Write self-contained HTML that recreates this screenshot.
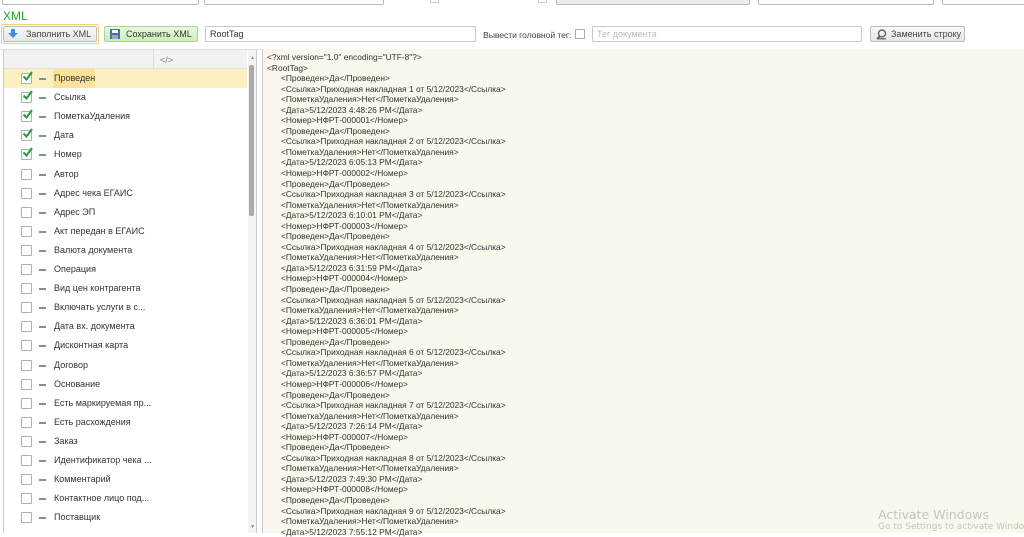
<!DOCTYPE html>
<html><head><meta charset="utf-8">
<style>
*{box-sizing:border-box;margin:0;padding:0}
body{width:1024px;height:533px;overflow:hidden;background:#fff;font-family:"Liberation Sans","DejaVu Sans",sans-serif;font-size:9px;color:#333;position:relative}
.a{position:absolute}
.top{top:-8px;height:13px;border:1px solid #bbb;border-radius:2px;background:#fff}
.btn{position:absolute;top:26px;height:16px;border:1px solid #bdbdbd;border-radius:2px;background:linear-gradient(#fafafa,#e6e6e6);font-size:9px;color:#444;line-height:14px}
.inp{position:absolute;top:26px;height:16px;border:1px solid #c8c8c8;border-radius:2px;background:#fff;line-height:14px;padding-left:4px}
.row{position:absolute;left:4px;width:243px;height:19px}
.cb{position:absolute;left:17px;top:4px;width:11px;height:11px;border:1px solid #b0b0b0;background:#fff;border-radius:1px}
.dash{position:absolute;left:35px;top:9px;width:7px;height:2px;background:#7a8fa8}
.lb{position:absolute;left:50px;top:4px;white-space:nowrap;color:#333}
.xml{position:absolute;left:267px;top:52px;line-height:10.55px;font-size:8.4px;color:#333;white-space:pre}
</style></head><body>
<div class="a top" style="left:2px;width:197px"></div>
<div class="a top" style="left:204px;width:180px"></div>
<div class="a" style="left:430px;top:-6px;width:9px;height:9px;border:1px solid #ccc"></div>
<div class="a" style="left:538px;top:-6px;width:9px;height:9px;border:1px solid #ccc"></div>
<div class="a top" style="left:556px;width:194px;background:#ececec"></div>
<div class="a top" style="left:758px;width:176px"></div>
<div class="a top" style="left:942px;width:90px"></div>

<div class="a" style="left:3px;top:9px;font-size:12px;color:#2aa32a">XML</div>

<div class="a" style="left:1px;top:24px;width:98px;height:20px;border:1px solid #f3d26b;border-radius:2px"></div>
<div class="btn" style="left:3px;width:94px"><svg class="a" style="left:4px;top:2px" width="10" height="10" viewBox="0 0 10 10"><path d="M3 0h4v4h3L5 9 0 4h3z" fill="#3d8fd9"/></svg><span class="a" style="left:22px">Заполнить XML</span></div>
<div class="btn" style="left:104px;width:94px;background:linear-gradient(#e8fae0,#c8efb8);border-color:#a9d49a"><svg class="a" style="left:5px;top:2px" width="10" height="10" viewBox="0 0 10 10"><rect width="10" height="10" fill="#4a6fa5"/><rect x="2" y="1" width="6" height="3" fill="#fff"/><rect x="2" y="6" width="6" height="4" fill="#9ab"/></svg><span class="a" style="left:21px;color:#333">Сохранить XML</span></div>
<div class="inp" style="left:205px;width:271px;color:#333">RootTag</div>
<div class="a" style="left:483px;top:30px;color:#444;font-size:8.7px;letter-spacing:-0.1px">Вывести головной тег:</div>
<div class="a" style="left:575px;top:29px;width:10px;height:10px;border:1px solid #aaa;background:#fff"></div>
<div class="inp" style="left:592px;width:270px;color:#bbb">Тег документа</div>
<div class="btn" style="left:870px;width:95px"><svg class="a" style="left:5px;top:2px" width="11" height="11" viewBox="0 0 11 11"><circle cx="6" cy="4.5" r="3.5" fill="none" stroke="#555" stroke-width="1.3"/><path d="M1 10l3-3" stroke="#555" stroke-width="1.6"/><rect x="2" y="9" width="8" height="1.5" fill="#777"/></svg><span class="a" style="left:20px">Заменить строку</span></div>

<div class="a" style="left:0;top:49px;width:1024px;height:1px;background:#ddd"></div>
<div class="a" style="left:3px;top:50px;width:254px;height:483px;border-left:1px solid #ccc;border-right:1px solid #ccc"></div>
<div class="a" style="left:4px;top:50px;width:243px;height:19px;background:#f2f2f2;border-bottom:1px solid #e0e0e0"></div>
<div class="a" style="left:153px;top:50px;width:1px;height:19px;background:#ddd"></div>
<div class="a" style="left:160px;top:55px;color:#777">&lt;/&gt;</div>
<div class="a" style="left:248px;top:50px;width:8px;height:483px;background:#f4f4f4"></div>
<div class="a" style="left:249px;top:65px;width:5px;height:151px;background:#aaa;border-radius:2px"></div>
<div class="a" style="left:250px;top:55px;font-size:5px;color:#888">▲</div>
<div class="a" style="left:250px;top:524px;font-size:5px;color:#888">▼</div>

<div class="a" style="left:4px;top:69px;width:243px;height:19px;background:#fcefc2"></div>
<div class="a" style="left:53px;top:69px;width:42px;height:19px;background:#fbe29a"></div>

<div id="rows"></div>

<div class="a" style="left:262px;top:49px;width:762px;height:484px;background:#faf8ec;border-left:1px solid #ccc"></div>
<div class="xml" id="x"></div>

<div class="a" style="left:878px;top:507px;font-size:12.5px;color:#c4c4c4;font-family:'DejaVu Sans',sans-serif">Activate Windows</div>
<div class="a" style="left:878px;top:522px;font-size:9px;color:#c4c4c4;font-family:'DejaVu Sans',sans-serif;white-space:nowrap">Go to Settings to activate Windows.</div>

<script>
var L=["Проведен","Ссылка","ПометкаУдаления","Дата","Номер","Автор","Адрес чека ЕГАИС","Адрес ЭП","Акт передан в ЕГАИС","Валюта документа","Операция","Вид цен контрагента","Включать услуги в с...","Дата вх. документа","Дисконтная карта","Договор","Основание","Есть маркируемая пр...","Есть расхождения","Заказ","Идентификатор чека ...","Комментарий","Контактное лицо под...","Поставщик"];
var h="";
L.forEach(function(t,i){var y=69+i*19.1;
h+='<div class="row" style="top:'+y+'px"><div class="cb"></div>'+(i<5?'<svg style="position:absolute;left:18px;top:2px" width="11" height="11" viewBox="0 0 11 11"><path d="M1.5 5.5l3 3L10 1" fill="none" stroke="#1e9e3a" stroke-width="2"/></svg>':'')+'<div class="dash"></div><div class="lb">'+t+'</div></div>';});
document.getElementById("rows").innerHTML=h;
var T=["4:48:26","6:05:13","6:10:01","6:31:59","6:36:01","6:36:57","7:26:14","7:49:30","7:55:12"];
var s='&lt;?xml version="1.0" encoding="UTF-8"?&gt;\n&lt;RootTag&gt;\n';
var p="      ";
T.forEach(function(t,i){var n=i+1;
s+=p+"&lt;Проведен&gt;Да&lt;/Проведен&gt;\n"+p+"&lt;Ссылка&gt;Приходная накладная "+n+" от 5/12/2023&lt;/Ссылка&gt;\n"+p+"&lt;ПометкаУдаления&gt;Нет&lt;/ПометкаУдаления&gt;\n"+p+"&lt;Дата&gt;5/12/2023 "+t+" PM&lt;/Дата&gt;\n";
if(i<8)s+=p+"&lt;Номер&gt;НФРТ-00000"+n+"&lt;/Номер&gt;\n";});
document.getElementById("x").innerHTML=s;
</script>
</body></html>
